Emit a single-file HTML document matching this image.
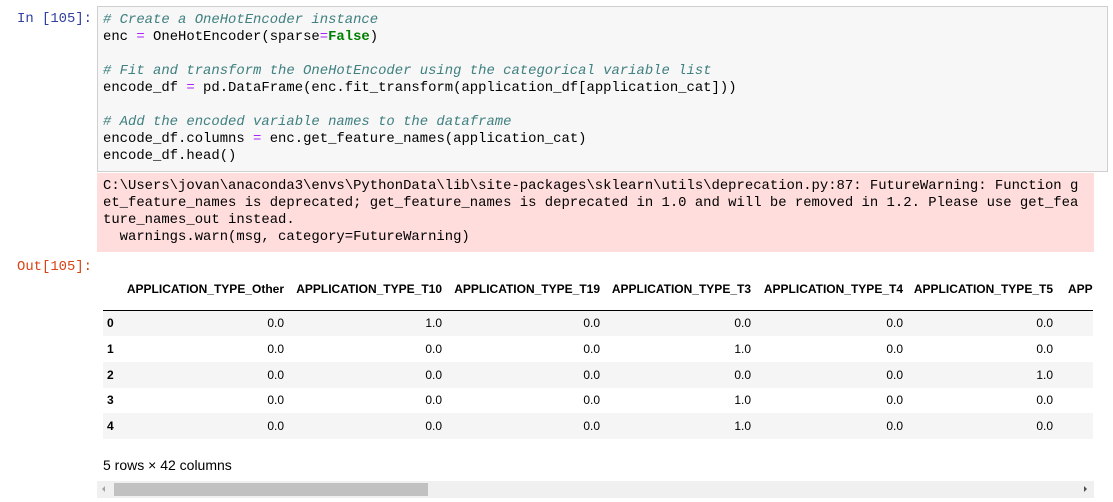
<!DOCTYPE html>
<html><head><meta charset="utf-8"><style>
body{margin:0;width:1113px;height:502px;background:#fff;position:relative;overflow:hidden;font-family:"Liberation Sans",Arial,sans-serif}
.mono{font-family:"Liberation Mono",monospace;font-size:13.9px;white-space:pre;line-height:17px}
.p{position:absolute;left:17px;}
#in{position:absolute;left:97px;top:6px;width:1009px;height:164px;background:#f7f7f7;border:1px solid #cfcfcf;}
#in .mono{position:absolute;left:5px;top:5px;color:#000}
.c{color:#408080;font-style:italic}.o{color:#aa22ff}.k{color:#008000;font-weight:bold}
#err{position:absolute;left:97px;top:173px;width:997px;height:79px;background:#fdd;}
#err .mono{position:absolute;left:6px;top:5px;color:#000}
table{border-collapse:collapse;font-size:12px;table-layout:fixed;width:1058px}
th{font-weight:bold;text-align:right;padding:0 8px 0 0;white-space:nowrap;overflow:hidden;color:#000}
thead tr{border-bottom:1px solid #000;height:30px}
thead th{vertical-align:top;padding-top:2px}
td{text-align:right;padding:0 8px 0 0;height:25.7px;color:#000}
tbody th{text-align:left;padding-left:4px}
tbody tr:nth-child(odd){background:#f5f5f5}
#wrap{position:absolute;left:103px;top:280px;width:990px;height:160px;overflow:hidden}
</style></head><body>
<div class="p mono" style="top:11px;color:#303f9f">In [105]:</div>
<div id="in"><div class="mono"><span class="c"># Create a OneHotEncoder instance</span>
enc <span class="o">=</span> OneHotEncoder(sparse<span class="o">=</span><span class="k">False</span>)

<span class="c"># Fit and transform the OneHotEncoder using the categorical variable list</span>
encode_df <span class="o">=</span> pd.DataFrame(enc.fit_transform(application_df[application_cat]))

<span class="c"># Add the encoded variable names to the dataframe</span>
encode_df.columns <span class="o">=</span> enc.get_feature_names(application_cat)
encode_df.head()</div></div>
<div id="err"><div class="mono">C:\Users\jovan\anaconda3\envs\PythonData\lib\site-packages\sklearn\utils\deprecation.py:87: FutureWarning: Function g
et_feature_names is deprecated; get_feature_names is deprecated in 1.0 and will be removed in 1.2. Please use get_fea
ture_names_out instead.
  warnings.warn(msg, category=FutureWarning)</div></div>
<div class="p mono" style="top:259px;color:#d84315">Out[105]:</div>
<div id="wrap"><table>
<colgroup><col style="width:20px"><col style="width:169px"><col style="width:158px"><col style="width:158px"><col style="width:151px"><col style="width:152px"><col style="width:150px"><col style="width:100px"></colgroup>
<thead><tr><th></th><th>APPLICATION_TYPE_Other</th><th>APPLICATION_TYPE_T10</th><th>APPLICATION_TYPE_T19</th><th>APPLICATION_TYPE_T3</th><th>APPLICATION_TYPE_T4</th><th>APPLICATION_TYPE_T5</th><th style="text-align:left;padding-left:7px">APPLICATION_TYPE_T6</th></tr></thead>
<tbody>
<tr><th>0</th><td>0.0</td><td>1.0</td><td>0.0</td><td>0.0</td><td>0.0</td><td>0.0</td><td></td></tr>
<tr><th>1</th><td>0.0</td><td>0.0</td><td>0.0</td><td>1.0</td><td>0.0</td><td>0.0</td><td></td></tr>
<tr><th>2</th><td>0.0</td><td>0.0</td><td>0.0</td><td>0.0</td><td>0.0</td><td>1.0</td><td></td></tr>
<tr><th>3</th><td>0.0</td><td>0.0</td><td>0.0</td><td>1.0</td><td>0.0</td><td>0.0</td><td></td></tr>
<tr><th>4</th><td>0.0</td><td>0.0</td><td>0.0</td><td>1.0</td><td>0.0</td><td>0.0</td><td></td></tr>
</tbody></table></div>
<div style="position:absolute;left:103px;top:457px;font-size:14px;color:#000">5 rows × 42 columns</div>
<div style="position:absolute;left:97px;top:481px;width:997px;height:17px;background:#f0f0f0"></div>
<div style="position:absolute;left:114px;top:483px;width:314px;height:13px;background:#c1c1c1"></div>
<div style="position:absolute;left:102px;top:486px;width:0;height:0;border-top:3px solid transparent;border-bottom:3px solid transparent;border-right:3px solid #a3a3a3"></div>
<div style="position:absolute;left:1084px;top:486px;width:0;height:0;border-top:3px solid transparent;border-bottom:3px solid transparent;border-left:3px solid #505050"></div>
</body></html>
